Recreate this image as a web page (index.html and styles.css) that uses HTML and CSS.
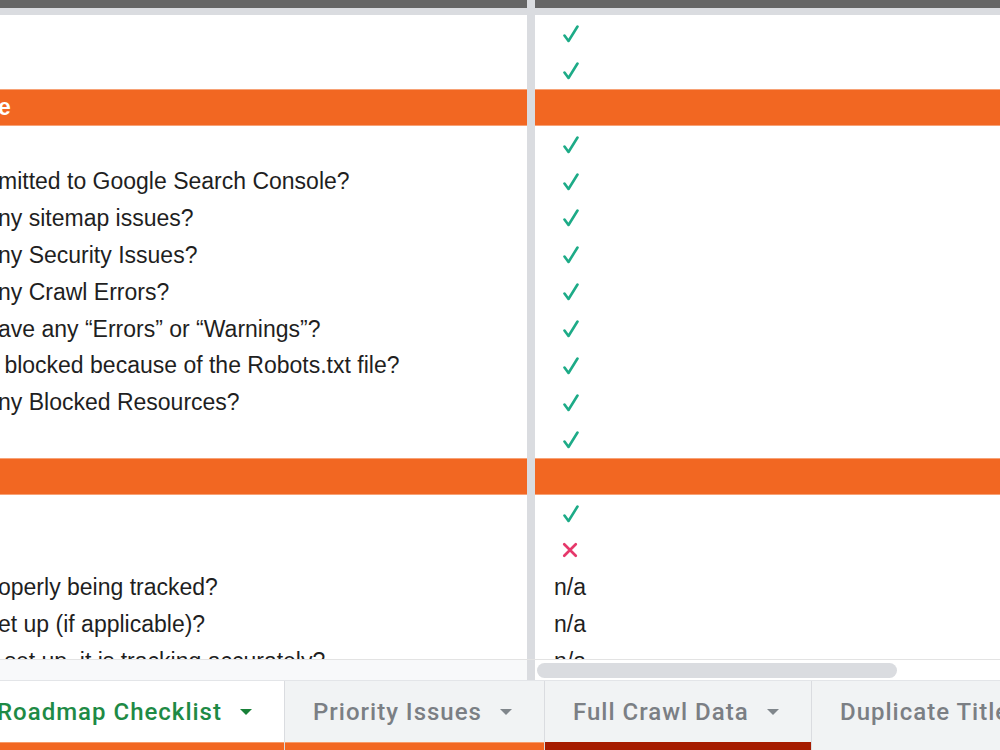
FILE: index.html
```html
<!DOCTYPE html>
<html lang="en">

<head>
	<meta charset="UTF-8">
	<meta name="viewport" content="width=device-width, initial-scale=1.0">
	<title>Roadmap Checklist</title>
	<link rel="stylesheet" href="styles.css">
</head>

<body>
	<div class="sheet">
		<div class="grid">
			<div class="row head"><div class="cell"></div><div class="split"></div><div class="cell"></div></div>

			<div class="row"><div class="cell"></div><div class="split"></div><div class="cell mark"><svg class="ok" viewBox="0 0 18 18"><path d="M2.5 10.5 L6.5 16 L15.5 1.5"/></svg></div></div>
			<div class="row"><div class="cell"></div><div class="split"></div><div class="cell mark"><svg class="ok" viewBox="0 0 18 18"><path d="M2.5 10.5 L6.5 16 L15.5 1.5"/></svg></div></div>
			<div class="row section"><div class="cell"><span class="txt">e</span></div><div class="split"></div><div class="cell"></div></div>
			<div class="row"><div class="cell"></div><div class="split"></div><div class="cell mark"><svg class="ok" viewBox="0 0 18 18"><path d="M2.5 10.5 L6.5 16 L15.5 1.5"/></svg></div></div>
			<div class="row"><div class="cell"><span class="txt">mitted to Google Search Console?</span></div><div class="split"></div><div class="cell mark"><svg class="ok" viewBox="0 0 18 18"><path d="M2.5 10.5 L6.5 16 L15.5 1.5"/></svg></div></div>
			<div class="row"><div class="cell"><span class="txt">ny sitemap issues?</span></div><div class="split"></div><div class="cell mark"><svg class="ok" viewBox="0 0 18 18"><path d="M2.5 10.5 L6.5 16 L15.5 1.5"/></svg></div></div>
			<div class="row"><div class="cell"><span class="txt">ny Security Issues?</span></div><div class="split"></div><div class="cell mark"><svg class="ok" viewBox="0 0 18 18"><path d="M2.5 10.5 L6.5 16 L15.5 1.5"/></svg></div></div>
			<div class="row"><div class="cell"><span class="txt">ny Crawl Errors?</span></div><div class="split"></div><div class="cell mark"><svg class="ok" viewBox="0 0 18 18"><path d="M2.5 10.5 L6.5 16 L15.5 1.5"/></svg></div></div>
			<div class="row"><div class="cell"><span class="txt">ave any “Errors” or “Warnings”?</span></div><div class="split"></div><div class="cell mark"><svg class="ok" viewBox="0 0 18 18"><path d="M2.5 10.5 L6.5 16 L15.5 1.5"/></svg></div></div>
			<div class="row"><div class="cell"><span class="txt"> blocked because of the Robots.txt file?</span></div><div class="split"></div><div class="cell mark"><svg class="ok" viewBox="0 0 18 18"><path d="M2.5 10.5 L6.5 16 L15.5 1.5"/></svg></div></div>
			<div class="row"><div class="cell"><span class="txt">ny Blocked Resources?</span></div><div class="split"></div><div class="cell mark"><svg class="ok" viewBox="0 0 18 18"><path d="M2.5 10.5 L6.5 16 L15.5 1.5"/></svg></div></div>
			<div class="row"><div class="cell"></div><div class="split"></div><div class="cell mark"><svg class="ok" viewBox="0 0 18 18"><path d="M2.5 10.5 L6.5 16 L15.5 1.5"/></svg></div></div>
			<div class="row section"><div class="cell"></div><div class="split"></div><div class="cell"></div></div>
			<div class="row"><div class="cell"></div><div class="split"></div><div class="cell mark"><svg class="ok" viewBox="0 0 18 18"><path d="M2.5 10.5 L6.5 16 L15.5 1.5"/></svg></div></div>
			<div class="row"><div class="cell"></div><div class="split"></div><div class="cell mark"><svg class="no" viewBox="0 0 18 18"><path d="M2.5 2.5 L15.5 15.5 M15.5 2.5 L2.5 15.5"/></svg></div></div>
			<div class="row"><div class="cell"><span class="txt">operly being tracked?</span></div><div class="split"></div><div class="cell na">n/a</div></div>
			<div class="row"><div class="cell"><span class="txt">et up (if applicable)?</span></div><div class="split"></div><div class="cell na">n/a</div></div>
			<div class="row"><div class="cell"><span class="txt"> set up, it is tracking accurately?</span></div><div class="split"></div><div class="cell na">n/a</div></div>
		</div>

		<div class="hscroll">
			<div class="corner"></div>
			<div class="split"></div>
			<div class="track"><div class="thumb"></div></div>
		</div>

		<div class="tabs">
			<div class="tab active">
				<div class="tab-label"><span class="name cut">Roadmap Checklist</span><span class="caret"></span></div>
				<div class="strip orange"></div>
			</div>
			<div class="tab">
				<div class="tab-label"><span class="name">Priority Issues</span><span class="caret"></span></div>
				<div class="strip orange"></div>
			</div>
			<div class="tab">
				<div class="tab-label"><span class="name">Full Crawl Data</span><span class="caret"></span></div>
				<div class="strip red"></div>
			</div>
			<div class="tab last">
				<div class="tab-label"><span class="name">Duplicate Titles</span></div>
				<div class="strip"></div>
			</div>
		</div>
	</div>
</body>

</html>
```

FILE: styles.css
```css
/* page */
body {
	margin: 0;
	background: #fff;
	font-family: 'Liberation Sans', Arial, sans-serif;
	color: #1f1f1f;
	overflow: hidden;
}

.sheet {
	width: 1000px;
	height: 750px;
	display: flex;
	flex-direction: column;
	overflow: hidden;
}

/* cell grid */
.grid {
	height: 659px;
	overflow: hidden;
	flex: none;
}

.row {
	display: grid;
	grid-template-columns: 527px 8px 1fr;
	height: 36.9px;
}

.row .cell {
	display: flex;
	align-items: center;
	overflow: hidden;
	white-space: pre;
	font-size: 23px;
	padding-top: 1px;
}

.split {
	background: #dadce0;
}

.row.head {
	height: 15px;
}

.row.head .cell {
	background: #666;
	border-bottom: 7px solid #dadce0;
	padding-top: 0;
}

.row.section .cell {
	background: #f26722;
	color: #fff;
	font-weight: 700;
	box-shadow: inset 0 1px 0 #f7a276, inset 0 -1px 0 #f7a276;
}

.txt {
	margin-left: -2px;
}

.mark {
	padding-left: 27px;
}

.mark svg {
	width: 18px;
	height: 18px;
	fill: none;
	stroke-linecap: round;
	stroke-linejoin: round;
}

.mark .ok {
	stroke: #1dab87;
	stroke-width: 2.6;
}

.mark .no {
	stroke: #e6386a;
	stroke-width: 3;
	width: 16px;
	height: 16px;
	margin-left: 0;
}

.na {
	padding-left: 19px;
}

/* horizontal scrollbar */
.hscroll {
	display: grid;
	grid-template-columns: 527px 8px 1fr;
	height: 21px;
	border-top: 1px solid #e3e3e3;
	box-sizing: border-box;
	flex: none;
}

.corner {
	background: #f8f9fa;
}

.track {
	background: #fff;
	padding: 3px 0 0 2px;
}

.thumb {
	width: 360px;
	height: 15px;
	border-radius: 8px;
	background: #dadce0;
}

/* sheet tabs */
.tabs {
	flex: 1;
	display: flex;
	background: #f1f3f4;
	border-top: 1px solid #e3e5e8;
}

.tab {
	flex: none;
	display: flex;
	flex-direction: column;
	border-right: 1px solid #dadce0;
	font-family: Roboto, 'Open Sans', sans-serif;
	font-size: 24px;
	font-weight: 500;
	letter-spacing: 1px;
	color: #7b7f84;
}

.tab:nth-child(1) { width: 284px; }
.tab:nth-child(2) { width: 259px; }
.tab:nth-child(3) { width: 266px; }
.tab.last { flex: 1; min-width: 0; border-right: none; }

.tab.active {
	background: #fff;
	color: #1e8a45;
}

.tab-label {
	flex: 1;
	display: flex;
	align-items: center;
	padding-left: 28px;
	white-space: nowrap;
	overflow: hidden;
}

.tab.active .tab-label {
	padding-left: 0;
}

.name.cut {
	margin-left: -3px;
}

.caret {
	margin-left: 18px;
	border-left: 6px solid transparent;
	border-right: 6px solid transparent;
	border-top: 6px solid #80868b;
}

.tab.active .caret {
	border-top-color: #188038;
}

.strip {
	height: 8px;
}

.strip.orange {
	background: #f26722;
	box-shadow: inset 0 1px 0 #f79a68;
}

.strip.red {
	background: #a61c00;
}
```
